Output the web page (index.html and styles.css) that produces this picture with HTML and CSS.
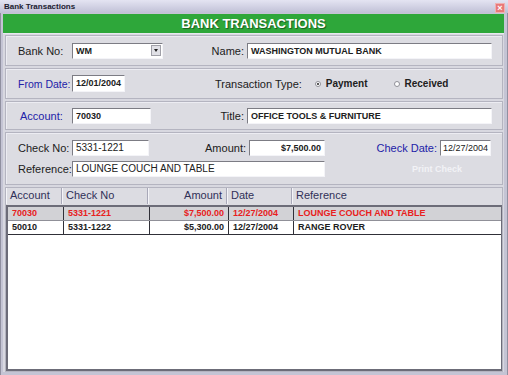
FILE: index.html
```html
<!DOCTYPE html>
<html lang="en">
<head>
<meta charset="UTF-8">
<title>Bank Transactions</title>
<link rel="stylesheet" href="styles.css">
</head>
<body>

<div class="window">
	<div class="titlebar">
		<span class="title">Bank Transactions</span>
		<span class="close">&times;</span>
	</div>
	<div class="frame">
		<div class="banner">BANK TRANSACTIONS</div>
		<div class="panel">

			<div class="section s1">
				<div class="row">
					<label class="lbl">Bank No:</label>
					<div class="field select w91"><span>WM</span><span class="arrow"></span></div>
					<label class="lbl right w84">Name:</label>
					<div class="field w245">WASHINGTON MUTUAL BANK</div>
				</div>
			</div>

			<div class="section s2">
				<div class="row">
					<label class="lbl blue">From Date:</label>
					<div class="field w53">12/01/2004</div>
					<label class="lbl tt">Transaction Type:</label>
					<span class="radio on"></span><span class="rlabel pay">Payment</span>
					<span class="radio"></span><span class="rlabel">Received</span>
				</div>
			</div>

			<div class="section s3">
				<div class="row">
					<label class="lbl blue acc">Account:</label>
					<div class="field w79">70030</div>
					<label class="lbl right w96">Title:</label>
					<div class="field w245">OFFICE TOOLS &amp; FURNITURE</div>
				</div>
			</div>

			<div class="section s4">
				<div class="row">
					<label class="lbl">Check No:</label>
					<div class="field w77 plain">5331-1221</div>
					<label class="lbl right w100">Amount:</label>
					<div class="field w76 num">$7,500.00</div>
					<label class="lbl right blue w115">Check Date:</label>
					<div class="field w51 plain tight">12/27/2004</div>
				</div>
				<div class="row">
					<label class="lbl">Reference:</label>
					<div class="field w253 plain">LOUNGE COUCH AND TABLE</div>
					<span class="printcheck">Print Check</span>
				</div>
			</div>

			<div class="grid">
				<div class="gridhead">
					<span class="c1">Account</span>
					<span class="c2">Check No</span>
					<span class="c3">Amount</span>
					<span class="c4">Date</span>
					<span class="c5">Reference</span>
				</div>
				<div class="gridbody">
					<div class="gridrow selected">
						<span class="c1">70030</span>
						<span class="c2">5331-1221</span>
						<span class="c3">$7,500.00</span>
						<span class="c4">12/27/2004</span>
						<span class="c5">LOUNGE COUCH AND TABLE</span>
					</div>
					<div class="gridrow">
						<span class="c1">50010</span>
						<span class="c2">5331-1222</span>
						<span class="c3">$5,300.00</span>
						<span class="c4">12/27/2004</span>
						<span class="c5">RANGE ROVER</span>
					</div>
				</div>
			</div>

		</div>
	</div>
</div>

</body>
</html>
```

FILE: styles.css
```css
html, body {
	margin: 0;
	padding: 0;
	background: #d8d8e0;
	font-family: "Liberation Sans", Arial, sans-serif;
	color: #202020;
}

.window {
	width: 508px;
	height: 375px;
	display: flex;
	flex-direction: column;
	overflow: hidden;
}

.titlebar {
	height: 13px;
	display: flex;
	align-items: center;
	justify-content: space-between;
	padding: 0 3px 0 4px;
	background: linear-gradient(#e4e4f2, #c0c0d6);
	font-size: 8px;
	font-weight: bold;
	color: #202030;
}
.close {
	width: 8px;
	height: 8px;
	margin-top: 3px;
	background: #e87878;
	border: 1px solid #f0b0b0;
	color: #fff;
	font-size: 9px;
	line-height: 8px;
	text-align: center;
}

.frame {
	flex: 1;
	display: flex;
	flex-direction: column;
	padding: 1px 4px 3px 3px;
	background: #c4c4d4;
	box-shadow: inset 1px 0 #9090a0, inset -1px 0 #9090a0;
}

.banner {
	height: 19px;
	background: #2ea73a;
	color: #fff;
	font-size: 13px;
	font-weight: bold;
	text-align: center;
	line-height: 20px;
	text-shadow: 1px 1px 1px #1a5a20;
	border-bottom: 1px solid #e8e8f0;
}

.panel {
	flex: 1;
	display: flex;
	flex-direction: column;
	gap: 2px;
	padding: 1px 1px 0 2px;
	background: #d8d8e0;
}

.section {
	border: 1px solid #b4b4c0;
	box-shadow: inset 1px 1px #ececf2;
	background: #dcdce2;
	padding-left: 12px;
	display: flex;
	flex-direction: column;
	justify-content: center;
}
.s1 { height: 29px; }
.s2 { height: 29px; }
.s3 { height: 27px; }
.s4 {
	height: 45px;
	justify-content: flex-start;
	padding-top: 6px;
	gap: 4px;
}

.row {
	display: flex;
	align-items: center;
	height: 17px;
}

.lbl {
	width: 54px;
	font-size: 11px;
	white-space: nowrap;
}
.lbl.right {
	text-align: right;
	padding-right: 3px;
	box-sizing: border-box;
}
.lbl.blue { color: #2222a8; }
.lbl.acc { padding-left: 2px; width: 52px; }
.lbl.tt { width: auto; margin-left: 90px; margin-right: 13px; }
.w84 { width: 84px; }
.w96 { width: 96px; }
.w100 { width: 100px; }
.w115 { width: 115px; }
.s2 .lbl.blue { font-size: 10.5px; }

.field {
	height: 16px;
	box-sizing: border-box;
	background: #fff;
	border-top: 1px solid #7c7c84;
	border-left: 1px solid #7c7c84;
	border-right: 1px solid #f4f4f8;
	border-bottom: 1px solid #f4f4f8;
	font-size: 9px;
	font-weight: bold;
	line-height: 14px;
	padding: 0 3px;
	white-space: nowrap;
	overflow: hidden;
}
.field.plain {
	font-weight: normal;
	font-size: 10px;
}
.field.tight {
	font-size: 9px;
	padding: 0 2px;
}
.field.num { text-align: right; }
.w91 { width: 91px; }
.w245 { width: 245px; }
.w53 { width: 53px; height: 17px; }
.w79 { width: 79px; }
.w77 { width: 77px; }
.w76 { width: 76px; }
.w51 { width: 51px; }
.w253 { width: 253px; }

.select {
	display: flex;
	justify-content: space-between;
	padding-right: 1px;
}
.arrow {
	width: 10px;
	height: 11px;
	margin-top: 1px;
	box-sizing: border-box;
	background: #e0e0e6;
	border: 1px solid #a0a0a8;
	position: relative;
}
.arrow::after {
	content: "";
	position: absolute;
	left: 2px;
	top: 3px;
	border-left: 2px solid transparent;
	border-right: 2px solid transparent;
	border-top: 3px solid #202020;
}

.radio {
	width: 6px;
	height: 6px;
	box-sizing: border-box;
	border-radius: 50%;
	background: #fff;
	border: 1px solid #909098;
	margin-right: 5px;
	position: relative;
}
.radio.on::after {
	content: "";
	position: absolute;
	left: 1px;
	top: 1px;
	width: 2px;
	height: 2px;
	background: #202020;
	border-radius: 50%;
}
.rlabel {
	font-size: 10px;
	font-weight: bold;
}
.rlabel.pay { margin-right: 26px; }

.printcheck {
	margin-left: 87px;
	font-size: 9px;
	font-weight: bold;
	color: #f2f2f6;
}

.grid {
	flex: 1;
	display: flex;
	flex-direction: column;
	border: 1px solid #b4b4c0;
	background: #dcdce2;
}
.gridhead {
	height: 16px;
	display: flex;
	font-size: 11px;
	color: #303058;
}
.gridhead span {
	box-sizing: border-box;
	padding: 1px 4px 0;
	border-right: 1px solid #a8a8b8;
	box-shadow: inset 1px 0 #f4f4f8;
}
.gridbody {
	flex: 1;
	margin: 1px 0 0 0;
	background: #fff;
	border-top: 2px solid #6c6c78;
	border-left: 2px solid #6c6c78;
	border-right: 1px solid #6c6c78;
	border-bottom: 2px solid #6c6c78;
}
.gridrow {
	height: 13px;
	display: flex;
	font-size: 9px;
	font-weight: bold;
	border-bottom: 1px solid #303038;
}
.gridrow span {
	box-sizing: border-box;
	padding: 1px 4px 0;
	border-right: 1px solid #303038;
	white-space: nowrap;
}
.gridrow.selected {
	background: #d2d2d6;
	color: #e82020;
	border-bottom-color: #909098;
}
.c1 { width: 56px; }
.c2 { width: 86px; }
.c3 { width: 79px; text-align: right; }
.c4 { width: 65px; }
.c5 { flex: 1; border-right: none !important; }
```
